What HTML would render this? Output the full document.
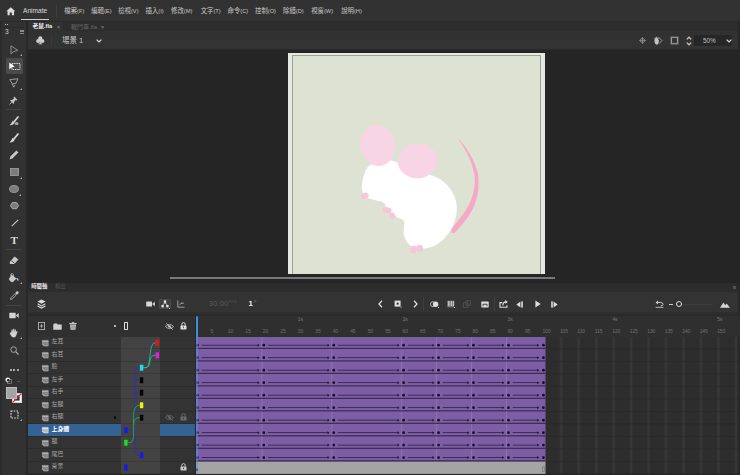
<!DOCTYPE html>
<html lang="zh-Hant">
<head>
<meta charset="utf-8">
<title>Animate</title>
<style>
*{margin:0;padding:0;box-sizing:border-box}
html,body{width:740px;height:475px;overflow:hidden;background:#252525}
body{position:relative;font-family:"Liberation Sans","Noto Sans CJK TC",sans-serif;color:#d0d0d0;font-size:7px;line-height:1}
.a{position:absolute}
.t{position:absolute;white-space:nowrap}
svg{position:absolute;overflow:visible}
</style>
</head>
<body>
<div class="a" style="left:0;top:0;width:740px;height:21.5px;background:#323232"></div>
<svg style="left:5.8px;top:6.6px" width="9.6" height="8.6" viewBox="0 0 11 10"><path d="M5.5 0.3 L0.3 4.9 H1.7 V9.6 H4.3 V6.4 H6.7 V9.6 H9.3 V4.9 H10.7 Z" fill="#dcdcdc"/></svg>
<div class="t" style="left:23px;top:8px;font-size:6.6px;color:#dcdcdc">Animate</div>
<div class="a" style="left:21px;top:18.6px;width:28px;height:1.2px;background:#cfcfcf"></div>
<div class="a" style="left:56px;top:5px;width:1px;height:12px;background:#3f3f3f"></div>
<div class="t" style="left:64.3px;top:7.6px;font-size:6.4px;color:#c8c8c8">檔案<span style="font-size:5.7px">(F)</span></div>
<div class="t" style="left:91.2px;top:7.6px;font-size:6.4px;color:#c8c8c8">編輯<span style="font-size:5.7px">(E)</span></div>
<div class="t" style="left:118.2px;top:7.6px;font-size:6.4px;color:#c8c8c8">檢視<span style="font-size:5.7px">(V)</span></div>
<div class="t" style="left:145.5px;top:7.6px;font-size:6.4px;color:#c8c8c8">插入<span style="font-size:5.7px">(I)</span></div>
<div class="t" style="left:171px;top:7.6px;font-size:6.4px;color:#c8c8c8">修改<span style="font-size:5.7px">(M)</span></div>
<div class="t" style="left:200.7px;top:7.6px;font-size:6.4px;color:#c8c8c8">文字<span style="font-size:5.7px">(T)</span></div>
<div class="t" style="left:227.5px;top:7.6px;font-size:6.4px;color:#c8c8c8">命令<span style="font-size:5.7px">(C)</span></div>
<div class="t" style="left:255px;top:7.6px;font-size:6.4px;color:#c8c8c8">控制<span style="font-size:5.7px">(O)</span></div>
<div class="t" style="left:283px;top:7.6px;font-size:6.4px;color:#c8c8c8">除錯<span style="font-size:5.7px">(D)</span></div>
<div class="t" style="left:311.2px;top:7.6px;font-size:6.4px;color:#c8c8c8">視窗<span style="font-size:5.7px">(W)</span></div>
<div class="t" style="left:341.2px;top:7.6px;font-size:6.4px;color:#c8c8c8">說明<span style="font-size:5.7px">(H)</span></div>
<div class="a" style="left:27px;top:21px;width:713px;height:10.5px;background:#2d2d2d"></div><div class="a" style="left:0;top:20.6px;width:740px;height:1.6px;background:#2a2a2a"></div><div class="a" style="left:28px;top:22.2px;width:34.6px;height:9.5px;background:#323232"></div>
<div class="t" style="left:32.6px;top:23.7px;font-size:5.7px;font-weight:bold;color:#f0f0f0">老鼠.fla</div>
<div class="t" style="left:56.8px;top:24px;font-size:6px;color:#8a8a8a">×</div>
<div class="t" style="left:71px;top:23.8px;font-size:6px;color:#686868">戰鬥車.fla</div>
<div class="t" style="left:100.8px;top:24px;font-size:6px;color:#8a8a8a">×</div>
<div class="a" style="left:27px;top:31px;width:711px;height:17.8px;background:linear-gradient(#303030,#323232 40%,#333333)"></div>
<div class="a" style="left:738px;top:21.5px;width:2px;height:260px;background:#262626"></div>
<svg style="left:35.6px;top:36.4px" width="8.6" height="8.6" viewBox="0 0 9 9"><circle cx="4.5" cy="2.4" r="2.1" fill="#cfcfcf"/><circle cx="2.3" cy="5.2" r="2.1" fill="#cfcfcf"/><circle cx="6.7" cy="5.2" r="2.1" fill="#cfcfcf"/><rect x="3.9" y="4" width="1.2" height="4.4" fill="#cfcfcf"/><rect x="2.6" y="7.8" width="3.8" height="0.9" fill="#cfcfcf"/></svg>
<div class="a" style="left:51px;top:36px;width:1px;height:10px;background:#3c3c3c"></div>
<div class="t" style="left:62px;top:36.6px;font-size:7.5px;color:#c4c4c4">場景 1</div>
<svg style="left:96.3px;top:38.6px" width="6" height="4" viewBox="0 0 6 4"><path d="M0.6 0.6 L3 3 L5.4 0.6" fill="none" stroke="#d8d8d8" stroke-width="1.2"/></svg>
<svg style="left:638.5px;top:36.5px" width="7" height="7" viewBox="0 0 7 7"><circle cx="3.5" cy="3.5" r="2.1" fill="none" stroke="#8c8c8c" stroke-width="0.9"/><path d="M3.5 0 V7 M0 3.5 H7" stroke="#8c8c8c" stroke-width="0.8"/></svg>
<svg style="left:652.6px;top:35.8px" width="10" height="10" viewBox="0 0 10 10"><path d="M1.5 3.5 Q1.5 1.2 2.5 1.2 L3 3 L3.3 0.8 L4 0.8 L4.2 3 L4.8 1.2 L5.5 1.5 L5.3 4 L6 4.5 Q5.5 8.5 4 8.8 Q2 8.5 1.5 6 Z" fill="#c4c4c4"/><path d="M5.6 1.2 L9 4.6 L6 7.6" fill="none" stroke="#a8a8a8" stroke-width="0.9"/></svg>
<svg style="left:669.5px;top:36px" width="9" height="9" viewBox="0 0 9 9"><rect x="1.4" y="1.4" width="6.2" height="6.2" fill="none" stroke="#a0a0a0" stroke-width="1.3"/><path d="M0 1.2 H9 M0 7.8 H9" stroke="#777" stroke-width="0.6"/></svg>
<svg style="left:685.5px;top:35.5px" width="6" height="10" viewBox="0 0 6 10"><path d="M0.8 3.4 L3 1.2 L5.2 3.4 M0.8 6.6 L3 8.8 L5.2 6.6" fill="none" stroke="#c4c4c4" stroke-width="1.3"/></svg>
<div class="a" style="left:694.3px;top:35.2px;width:38.2px;height:11px;background:#262626;border-radius:1px"></div>
<div class="t" style="left:703px;top:37.9px;font-size:6.4px;color:#c0c0c0">50%</div>
<svg style="left:726.3px;top:38.8px" width="6" height="4" viewBox="0 0 6 4"><path d="M0.6 0.6 L3 3 L5.4 0.6" fill="none" stroke="#d8d8d8" stroke-width="1.2"/></svg>
<div class="a" style="left:27px;top:48.8px;width:711px;height:1.8px;background:#2a2a2a"></div>
<div class="a" style="left:28px;top:50.4px;width:710px;height:232px;background:#252525"></div>
<div class="a" style="left:288px;top:53px;width:257px;height:221px;background:#e6e9e2"></div>
<div class="a" style="left:292px;top:55px;width:249px;height:219px;background:#dee2d3;border:1px solid #9da196;border-bottom:none"></div>
<svg style="left:0;top:0" width="740" height="475" viewBox="0 0 740 475">
<path d="M457.2 137.4 C466 146 475 160 478 174 C479.5 184 478.4 198 473 208.5 C468.5 217.5 462 225.5 455 232.5 C453 234 451 233 451.4 231 C452.5 227 458 221 462.5 215 C467 209 471 202 473 194 C475.3 185 475.2 178 474 173 C471.5 160 465 148 457.2 137.4 Z" fill="#f5a9c6"/>
<path d="M367.8 166.9 C365.7 169.3 364.5 173.6 363.5 176.9 C362.5 180.2 361.8 184.1 361.8 186.9 C361.8 189.6 362.3 191.5 363.5 193.4 C364.8 195.3 365.9 197.0 369.2 198.5 C372.5 200.0 380.5 200.8 383.4 202.5 C386.4 204.2 384.7 206.4 386.9 208.8 C389.0 211.1 393.4 214.6 396.3 216.7 C399.1 218.8 402.7 218.4 403.9 221.3 C405.2 224.1 403.0 230.2 403.6 233.8 C404.3 237.4 405.8 240.6 407.6 242.9 C409.5 245.2 411.7 246.6 414.7 247.5 C417.8 248.4 421.9 249.2 426.1 248.3 C430.4 247.5 436.1 245.7 440.3 242.3 C444.6 239.0 449.0 233.3 451.7 228.1 C454.5 222.9 456.4 216.3 456.8 211.0 C457.3 205.8 456.1 201.1 454.6 196.8 C453.0 192.5 450.5 188.8 447.5 185.4 C444.4 182.1 440.6 179.0 436.1 176.9 C431.6 174.8 425.4 174.1 420.4 172.6 C415.5 171.2 410.0 170.0 406.2 168.4 C402.4 166.7 401.0 164.1 397.7 162.7 C394.4 161.3 389.9 159.8 386.3 159.8 C382.7 159.8 379.4 161.5 376.3 162.7 C373.3 163.9 369.9 164.6 367.8 166.9 Z" fill="#ffffff"/>
<ellipse cx="377.6" cy="145.4" rx="17.4" ry="20.6" fill="#f7d5e5" transform="rotate(-10 377.6 145.4)"/>
<ellipse cx="417.8" cy="160.9" rx="20" ry="17.4" fill="#f7d5e5" transform="rotate(-6 417.8 160.9)"/>
<ellipse cx="364.8" cy="195.8" rx="3.9" ry="3" fill="#f6c6dc" transform="rotate(-25 364.8 195.8)"/>
<ellipse cx="387.2" cy="210.2" rx="4.4" ry="3" fill="#f6c6dc" transform="rotate(10 387.2 210.2)"/>
<ellipse cx="392.4" cy="215.6" rx="2.6" ry="3.4" fill="#f6c6dc" transform="rotate(-20 392.4 215.6)"/>
<ellipse cx="413.6" cy="249.6" rx="3.2" ry="4" fill="#f6c6dc" transform="rotate(20 413.6 249.6)"/>
<ellipse cx="419.6" cy="248.4" rx="3.4" ry="3.6" fill="#f6c6dc"/>
</svg>
<div class="a" style="left:170px;top:277px;width:385px;height:2px;background:#787878"></div>
<div class="a" style="left:0;top:21.5px;width:27px;height:454px;background:#323232"></div>
<div class="a" style="left:26.4px;top:21.5px;width:1.4px;height:454px;background:#282828"></div>
<div class="a" style="left:0;top:22px;width:2px;height:453px;background:#2b2b2b"></div>
<div class="a" style="left:4.5px;top:23.6px;width:1.2px;height:1.2px;background:#bbb"></div><div class="a" style="left:6.5px;top:23.6px;width:1.2px;height:1.2px;background:#bbb"></div>
<div class="a" style="left:3px;top:26.8px;width:21px;height:0.8px;background:#2a2a2a"></div>
<div class="t" style="left:5px;top:29.4px;font-size:6.6px;color:#d0d0d0">3</div>
<div class="a" style="left:20px;top:30px;width:4px;height:0.8px;background:#8a8a8a"></div><div class="a" style="left:20px;top:31.4px;width:4px;height:0.8px;background:#8a8a8a"></div><div class="a" style="left:20px;top:32.8px;width:4px;height:0.8px;background:#8a8a8a"></div>
<svg style="left:10.3px;top:45.0px" width="9" height="10" viewBox="0 0 9 10"><path d="M1 0.8 L1 8.8 L3.6 6.6 L7.8 5.4 Z" fill="none" stroke="#8e8e8e" stroke-width="1"/></svg>
<svg style="left:19.5px;top:53.5px" width="2" height="2" viewBox="0 0 2 2"><path d="M2 0 V2 H0 Z" fill="#aaa"/></svg>
<div class="a" style="left:6px;top:58px;width:17px;height:16px;background:#4b4b4b;border-radius:1.5px"></div>
<svg style="left:8.5px;top:61.5px" width="12" height="9" viewBox="0 0 12 9"><rect x="3" y="1.5" width="8" height="6" fill="none" stroke="#e8e8e8" stroke-width="0.9" stroke-dasharray="1.4 0.8"/><path d="M0.3 0.6 L0.3 7.4 L2.2 5.8 L5.6 4.6 Z" fill="#ffffff"/></svg>
<svg style="left:9.2px;top:78.0px" width="10" height="10" viewBox="0 0 10 10"><path d="M0.8 1.6 L9 0.8 L7 5.2 L3.4 6 Z" fill="none" stroke="#a8a8a8" stroke-width="0.9"/><path d="M3.4 6 L4.6 9.2 L6 7" fill="none" stroke="#a8a8a8" stroke-width="0.9"/></svg>
<svg style="left:19.6px;top:87.8px" width="2" height="2" viewBox="0 0 2 2"><path d="M2 0 V2 H0 Z" fill="#aaa"/></svg>
<svg style="left:9.0px;top:95.5px" width="9" height="9" viewBox="0 0 9 9"><path d="M5.2 0.6 L8.4 3.8 L7.4 4.4 L6.6 4 L5 6 L5.2 7.4 L4.4 7.8 L1.2 4.6 L1.8 3.8 L3 4 L5 2.4 L4.6 1.4 Z" fill="#c6c6c6"/><path d="M2.8 6.2 L0.6 8.4" stroke="#c6c6c6" stroke-width="0.9"/></svg>
<div class="a" style="left:6px;top:109.4px;width:15px;height:1px;background:#444"></div>
<svg style="left:9.2px;top:116.0px" width="10" height="10" viewBox="0 0 10 10"><path d="M9 1 L5.2 5.6" stroke="#d4d4d4" stroke-width="1.7" stroke-linecap="round"/><path d="M3.6 4.8 L5.6 6.8 Q4.6 9.4 0.6 9.2 Q2.6 7.6 3.6 4.8Z" fill="#d4d4d4"/><ellipse cx="7.6" cy="7.6" rx="1.9" ry="1.5" fill="#a8a8a8"/></svg>
<svg style="left:9.2px;top:133.0px" width="10" height="10" viewBox="0 0 10 10"><path d="M9 1 L5.2 5.6" stroke="#d8d8d8" stroke-width="1.7" stroke-linecap="round"/><path d="M3.6 4.8 L5.6 6.8 Q4.6 9.6 0.6 9.4 Q2.6 7.6 3.6 4.8Z" fill="#d8d8d8"/></svg>
<svg style="left:9.0px;top:150.0px" width="10" height="10" viewBox="0 0 10 10"><path d="M7.4 0.6 L9.4 2.6 L3.4 8.6 L0.6 9.4 L1.4 6.6 Z" fill="#c8c8c8"/></svg>
<svg style="left:9.8px;top:168.2px" width="9" height="8" viewBox="0 0 9 8"><rect x="0.5" y="0.5" width="8" height="7" fill="#7c7c7c" stroke="#a4a4a4" stroke-width="0.8"/></svg>
<svg style="left:19.6px;top:176.8px" width="2" height="2" viewBox="0 0 2 2"><path d="M2 0 V2 H0 Z" fill="#aaa"/></svg>
<svg style="left:9.0px;top:185.0px" width="10" height="8" viewBox="0 0 10 8"><ellipse cx="5" cy="4" rx="4.5" ry="3.5" fill="#7c7c7c" stroke="#a4a4a4" stroke-width="0.8"/></svg>
<svg style="left:19px;top:193.5px" width="2" height="2" viewBox="0 0 2 2"><path d="M2 0 V2 H0 Z" fill="#aaa"/></svg>
<svg style="left:9.5px;top:202.20000000000002px" width="9" height="7.2" viewBox="0 0 9 7.2"><path d="M2.4 0.5 H6.6 L8.6 3.6 L6.6 6.7 H2.4 L0.4 3.6 Z" fill="#7c7c7c" stroke="#b4b4b4" stroke-width="0.9"/></svg>
<svg style="left:10.5px;top:218.8px" width="8" height="8" viewBox="0 0 8 8"><path d="M0.8 7.2 L7.2 0.8" stroke="#c4c4c4" stroke-width="1.2"/></svg>
<div class="t" style="left:10.5px;top:235.4px;font-size:11px;font-family:'Liberation Serif',serif;font-weight:bold;color:#dcdcdc">T</div>
<div class="a" style="left:6px;top:249.4px;width:15px;height:1px;background:#444"></div>
<svg style="left:9.3px;top:256.0px" width="10" height="9" viewBox="0 0 10 9"><path d="M5.6 0.6 L9.4 3.4 L5.4 8 L1 8 L0.6 6 Z" fill="#c8c8c8"/><path d="M2.2 4.6 L5.6 7.4" stroke="#323232" stroke-width="0.8"/></svg>
<svg style="left:7.5px;top:273.0px" width="11" height="10" viewBox="0 0 11 10"><path d="M3.6 1.6 L8.4 5.4 L5 9 Q3.6 9.6 2 8 L0.8 6 Z" fill="#c8c8c8"/><path d="M3.4 3.6 Q1.6 0.4 4.4 0.6 Q5.8 1 5.4 3" fill="none" stroke="#c8c8c8" stroke-width="0.8"/><path d="M8.2 5.2 Q10.8 4.6 10.4 8.2 Q9 7 8.2 5.2Z" fill="#c8c8c8"/></svg>
<svg style="left:19.5px;top:282px" width="2" height="2" viewBox="0 0 2 2"><path d="M2 0 V2 H0 Z" fill="#aaa"/></svg>
<svg style="left:9.7px;top:290.7px" width="9" height="9" viewBox="0 0 10 10"><path d="M7.2 0.6 Q8.6 -0.2 9.4 0.8 Q10.2 1.8 9.2 2.8 L7.8 4.2 L5.8 2.2 Z" fill="#c8c8c8"/><path d="M5.6 3 L7 4.4 L2.6 8.8 L0.6 9.4 L1.2 7.4 Z" fill="none" stroke="#c8c8c8" stroke-width="0.8"/></svg>
<div class="a" style="left:6px;top:305.2px;width:15px;height:1px;background:#444"></div>
<svg style="left:9.2px;top:312.1px" width="10" height="7" viewBox="0 0 10 7"><rect x="0.3" y="0.8" width="6.4" height="5.4" rx="0.6" fill="#d4d4d4"/><path d="M6.9 3.5 L9.7 1 V6 Z" fill="#d4d4d4"/></svg>
<svg style="left:8.5px;top:327.5px" width="10" height="10" viewBox="0 0 10 10"><path d="M2.2 4.4 L2.6 1.6 L3.6 1.6 L3.8 4 L4.2 0.8 L5.2 0.8 L5.4 4 L6 1.4 L7 1.6 L6.8 4.6 L7.6 3 L8.6 3.4 L7.6 6.6 Q7 9.4 4.6 9.4 Q2.6 9.2 1.6 7 L0.6 5 L1.4 4.4 Z" fill="#d0d0d0"/></svg>
<svg style="left:19.5px;top:336.5px" width="2" height="2" viewBox="0 0 2 2"><path d="M2 0 V2 H0 Z" fill="#aaa"/></svg>
<svg style="left:9.9px;top:345.7px" width="9" height="9" viewBox="0 0 9 9"><circle cx="3.6" cy="3.6" r="2.8" fill="none" stroke="#b0b0b0" stroke-width="0.9"/><path d="M5.7 5.7 L8.5 8.5" stroke="#b0b0b0" stroke-width="1.2"/></svg>
<div class="a" style="left:10.3px;top:368.8px;width:2px;height:2px;border-radius:1px;background:#d0d0d0"></div>
<div class="a" style="left:13.4px;top:368.8px;width:2px;height:2px;border-radius:1px;background:#d0d0d0"></div>
<div class="a" style="left:16.5px;top:368.8px;width:2px;height:2px;border-radius:1px;background:#d0d0d0"></div>
<svg style="left:5.300000000000001px;top:376.7px" width="7" height="7" viewBox="0 0 7 7"><rect x="2.6" y="2.6" width="3.8" height="3.8" fill="none" stroke="#8a8a8a" stroke-width="0.7"/><circle cx="2.8" cy="2.8" r="2.4" fill="#f0f0f0"/><circle cx="3.3" cy="3.3" r="1.3" fill="#111"/></svg>
<div class="a" style="left:16.5px;top:380.8px;width:3.5px;height:0.7px;background:#555"></div>
<div class="a" style="left:11.5px;top:393px;width:10px;height:10px;background:#fff;border:0.8px solid #d8d8d8"></div>
<svg style="left:11.5px;top:393px" width="10" height="10" viewBox="0 0 10 10"><rect x="2.4" y="2.4" width="5.2" height="5.2" fill="#323232"/><path d="M0.5 9.5 L9.5 0.5" stroke="#e0203a" stroke-width="1.1"/></svg>
<div class="a" style="left:5.5px;top:387px;width:11.5px;height:11.5px;background:#a4a4a4;border:0.6px solid #bdbdbd"></div>
<svg style="left:9.6px;top:410.1px" width="9" height="9" viewBox="0 0 9 9"><rect x="1" y="1" width="7" height="7" fill="none" stroke="#dcdcdc" stroke-width="1.1" stroke-dasharray="1.6 1.1"/></svg>
<svg style="left:19.8px;top:419px" width="2" height="2" viewBox="0 0 2 2"><path d="M2 0 V2 H0 Z" fill="#aaa"/></svg>
<div class="a" style="left:28px;top:282.5px;width:712px;height:192.5px;background:#333333"></div>
<div class="a" style="left:28px;top:282.5px;width:712px;height:9.5px;background:#2c2c2c"></div>
<div class="a" style="left:28px;top:312px;width:712px;height:4px;background:linear-gradient(#303030,#2a2a2a 70%,#2a2a2a)"></div>
<div class="a" style="left:28px;top:316px;width:168px;height:20.5px;background:#303030"></div>
<div class="t" style="left:31.3px;top:283.9px;font-size:5.3px;font-weight:bold;color:#ececec">時間軸</div>
<div class="t" style="left:55px;top:283.9px;font-size:5.3px;color:#555">輸出</div>
<div class="a" style="left:732.6px;top:285.6px;width:3.2px;height:3.2px;background:#505050"></div>
<svg style="left:37.10px;top:299.40px" width="9" height="10" viewBox="0 0 9 10"><path d="M4.5 0.4 L8.6 2.6 L4.5 4.8 L0.4 2.6 Z" fill="#dcdcdc"/><path d="M0.6 4.8 L4.5 6.9 L8.4 4.8 M0.6 7 L4.5 9.1 L8.4 7" fill="none" stroke="#dcdcdc" stroke-width="1.1"/></svg>
<svg style="left:145.50px;top:301.30px" width="9" height="6" viewBox="0 0 9 6"><rect x="0.2" y="0.4" width="5.8" height="5.2" rx="0.6" fill="#d8d8d8"/><path d="M6.2 3 L8.8 0.8 V5.2 Z" fill="#d8d8d8"/></svg>
<div class="a" style="left:159.3px;top:298.6px;width:11.4px;height:10.6px;background:#3e3e3e;border:0.6px solid #4a4a4a;border-radius:1px"></div>
<svg style="left:160.80px;top:300.00px" width="8" height="8" viewBox="0 0 8 8"><rect x="2.8" y="0.4" width="2.4" height="2.4" fill="#e4e4e4"/><rect x="0.4" y="5" width="2.4" height="2.4" fill="#e4e4e4"/><rect x="5.2" y="5" width="2.4" height="2.4" fill="#e4e4e4"/><path d="M4 2.8 L1.6 5 M4 2.8 L6.4 5" stroke="#e4e4e4" stroke-width="0.8"/></svg>
<div class="a" style="left:169px;top:308px;width:1px;height:1px;background:#ccc"></div>
<svg style="left:177.00px;top:300.40px" width="8" height="8" viewBox="0 0 8 8"><path d="M0.8 0.4 V7.2 H7.6" fill="none" stroke="#a8a8a8" stroke-width="0.9"/><path d="M2.4 5.2 L4.4 3.2 L7 3.2" fill="none" stroke="#a8a8a8" stroke-width="0.8"/><circle cx="4.4" cy="3.2" r="0.8" fill="#a8a8a8"/></svg>
<div class="t" style="left:208.5px;top:300.4px;font-size:7.8px;color:#585858;letter-spacing:0.1px">30.00<span style="font-size:3.6px;position:relative;top:-3.2px;left:0.6px">FPS</span></div>
<div class="t" style="left:248.6px;top:300.4px;font-size:7.8px;color:#f0f0f0;font-weight:bold">1<span style="font-size:3.6px;position:relative;top:-3.2px;left:1.4px;color:#777;font-weight:normal">F</span></div>
<svg style="left:378.00px;top:300.00px" width="5" height="8" viewBox="0 0 5 8"><path d="M4 0.8 L1 4 L4 7.2" fill="none" stroke="#dedede" stroke-width="1.3"/></svg>
<svg style="left:393.80px;top:300.00px" width="8" height="8" viewBox="0 0 8 8"><rect x="0.6" y="0.6" width="6" height="6" fill="#dedede"/><rect x="2.7" y="2.7" width="1.9" height="1.9" fill="#2a2a2a"/><rect x="6.6" y="6.6" width="1" height="1" fill="#dedede"/></svg>
<svg style="left:412.50px;top:300.00px" width="5" height="8" viewBox="0 0 5 8"><path d="M1 0.8 L4 4 L1 7.2" fill="none" stroke="#dedede" stroke-width="1.3"/></svg>
<div class="a" style="left:423.2px;top:297px;width:1px;height:14px;background:#404040"></div>
<svg style="left:429.70px;top:300.50px" width="9" height="7" viewBox="0 0 9 7"><circle cx="3" cy="3.2" r="2.5" fill="none" stroke="#bcbcbc" stroke-width="0.9"/><circle cx="5.6" cy="3.2" r="2.7" fill="#dedede"/><rect x="8" y="6" width="1" height="1" fill="#dedede"/></svg>
<svg style="left:446.60px;top:300.00px" width="8" height="8" viewBox="0 0 8 8"><rect x="0.6" y="0.8" width="2.2" height="5.2" fill="#bdbdbd"/><rect x="3.4" y="0.8" width="2.2" height="5.2" fill="#bdbdbd"/><rect x="6" y="0.8" width="1.2" height="5.2" fill="#bdbdbd"/><path d="M0.4 6.8 H7" stroke="#bdbdbd" stroke-width="0.7"/><rect x="7" y="7" width="1" height="1" fill="#dedede"/></svg>
<svg style="left:463.30px;top:300.20px" width="8" height="8" viewBox="0 0 8 8"><rect x="0.6" y="2.8" width="4.4" height="4.4" fill="none" stroke="#555" stroke-width="0.8"/><rect x="3" y="0.8" width="4.4" height="4.4" fill="none" stroke="#555" stroke-width="0.8"/></svg>
<svg style="left:480.60px;top:300.70px" width="8" height="7" viewBox="0 0 8 7"><rect x="0.3" y="0.5" width="7.4" height="6" rx="0.8" fill="#dedede"/><path d="M2 5.2 V3.2 H6 V5.2" fill="none" stroke="#2f2f2f" stroke-width="0.9"/></svg>
<div class="a" style="left:493.5px;top:297px;width:1px;height:14px;background:#3e3e3e"></div>
<svg style="left:499.10px;top:300.00px" width="9" height="8" viewBox="0 0 9 8"><path d="M3.2 2.6 H1 V7.2 H8 V5.2" fill="none" stroke="#dedede" stroke-width="1.1"/><path d="M3.9 5.4 Q4 2 6.8 1.9" fill="none" stroke="#dedede" stroke-width="1.1"/><path d="M6.2 0 L8.9 1.9 L6.2 3.8 Z" fill="#dedede"/></svg>
<svg style="left:516.40px;top:300.50px" width="8" height="7" viewBox="0 0 8 7"><path d="M4.4 0.4 L0.4 3.5 L4.4 6.6 Z" fill="#dedede"/><rect x="5.2" y="0.4" width="1.6" height="6.2" fill="#dedede"/></svg>
<svg style="left:535.00px;top:300.00px" width="6" height="8" viewBox="0 0 6 8"><path d="M0.4 0.4 L5.8 4 L0.4 7.6 Z" fill="#dedede"/></svg>
<svg style="left:550.40px;top:300.50px" width="8" height="7" viewBox="0 0 8 7"><path d="M3.6 0.4 L7.6 3.5 L3.6 6.6 Z" fill="#dedede"/><rect x="1.2" y="0.4" width="1.6" height="6.2" fill="#dedede"/></svg>
<svg style="left:654.80px;top:300.20px" width="9" height="8" viewBox="0 0 9 8"><path d="M2.2 2.4 H5.6 Q8.2 2.6 8 4.6 Q7.6 6 5.6 6" fill="none" stroke="#cfcfcf" stroke-width="1"/><path d="M3 0.4 L0.6 2.4 L3 4.4 Z" fill="#cfcfcf"/><path d="M0.6 7.4 H8.4" stroke="#cfcfcf" stroke-width="0.8"/></svg>
<div class="a" style="left:668.5px;top:303.7px;width:4.5px;height:1.1px;background:#cfcfcf"></div>
<div class="a" style="left:681px;top:303.9px;width:32px;height:0.8px;background:#3d3d3d"></div>
<div class="a" style="left:675.5px;top:301.2px;width:6px;height:6px;border:1.1px solid #e0e0e0;border-radius:3px;background:#2f2f2f"></div>
<svg style="left:719.60px;top:301.50px" width="10" height="6" viewBox="0 0 10 6"><path d="M0 5.8 L3.4 0.6 L5.2 3.2 L6.6 1.4 L10 5.8 Z" fill="#d4d4d4"/></svg>
<svg style="left:37.90px;top:322.00px" width="7" height="8" viewBox="0 0 7 8"><rect x="0.4" y="0.4" width="6.2" height="7.2" fill="none" stroke="#bdbdbd" stroke-width="0.8"/><path d="M3.5 2.2 V5.8 M1.9 4 H5.1" stroke="#bdbdbd" stroke-width="0.8"/></svg>
<svg style="left:53.10px;top:322.50px" width="9" height="7" viewBox="0 0 9 7"><path d="M0.3 1.6 L0.3 6.7 H8.7 V1.6 H4.8 L4 0.4 H1.1 Z" fill="#d0d0d0"/></svg>
<svg style="left:69.00px;top:322.00px" width="8" height="8" viewBox="0 0 8 8"><path d="M1 2.4 H7 L6.4 7.8 H1.6 Z" fill="#d0d0d0"/><path d="M0.2 1.5 H7.8 M2.8 0.5 H5.2" stroke="#d0d0d0" stroke-width="0.9"/><path d="M3 3.4 V6.8 M5 3.4 V6.8" stroke="#2f2f2f" stroke-width="0.6"/></svg>
<div class="a" style="left:114px;top:325px;width:2.2px;height:2.2px;border-radius:1px;background:#dcdcdc"></div>
<div class="a" style="left:124px;top:322px;width:4px;height:8.4px;border:0.9px solid #e0e0e0;border-radius:0.8px"></div>
<svg style="left:165.20px;top:322.50px" width="9" height="7" viewBox="0 0 9 7"><path d="M0.4 3.5 Q4.5 -0.6 8.6 3.5 Q4.5 7.6 0.4 3.5 Z" fill="none" stroke="#c8c8c8" stroke-width="0.8"/><circle cx="4.5" cy="3.5" r="1.3" fill="#c8c8c8"/><path d="M1.2 0.4 L7.8 6.6" stroke="#c8c8c8" stroke-width="0.9"/></svg>
<svg style="left:179.50px;top:321.80px" width="7" height="8" viewBox="0 0 7 8"><path d="M1.8 3.6 V2.4 Q1.8 0.6 3.5 0.6 Q5.2 0.6 5.2 2.4 V3.6" fill="none" stroke="#e0e0e0" stroke-width="1"/><rect x="0.5" y="3.4" width="6" height="4.2" rx="0.5" fill="#e0e0e0"/><rect x="3.1" y="4.6" width="0.8" height="1.6" fill="#2f2f2f"/></svg>
<div class="a" style="left:121.3px;top:336.5px;width:39px;height:137.39px;background:#434343;border-radius:1.5px 1.5px 0 0"></div>
<div class="a" style="left:28px;top:348.49px;width:168px;height:0.7px;background:rgba(0,0,0,0.13)"></div>
<svg style="left:41.70px;top:339.75px" width="6.6" height="6.4" viewBox="0 0 6.6 6.4"><path d="M0.4 0.4 H6.2 V6 H1.9 L0.4 4.5 Z" fill="#868686" stroke="#b4b4b4" stroke-width="0.6"/><path d="M0.4 1.5 H6.2" stroke="#b4b4b4" stroke-width="0.9"/><path d="M0.4 4.5 H1.9 V6" fill="none" stroke="#b4b4b4" stroke-width="0.5"/></svg>
<div class="t" style="left:51.6px;top:339.40px;font-size:5.9px;color:#a8a8a8;font-weight:normal">左耳</div>
<div class="a" style="left:28px;top:360.98px;width:168px;height:0.7px;background:rgba(0,0,0,0.13)"></div>
<svg style="left:41.70px;top:352.24px" width="6.6" height="6.4" viewBox="0 0 6.6 6.4"><path d="M0.4 0.4 H6.2 V6 H1.9 L0.4 4.5 Z" fill="#868686" stroke="#b4b4b4" stroke-width="0.6"/><path d="M0.4 1.5 H6.2" stroke="#b4b4b4" stroke-width="0.9"/><path d="M0.4 4.5 H1.9 V6" fill="none" stroke="#b4b4b4" stroke-width="0.5"/></svg>
<div class="t" style="left:51.6px;top:351.89px;font-size:5.9px;color:#a8a8a8;font-weight:normal">右耳</div>
<div class="a" style="left:28px;top:373.47px;width:168px;height:0.7px;background:rgba(0,0,0,0.13)"></div>
<svg style="left:41.70px;top:364.73px" width="6.6" height="6.4" viewBox="0 0 6.6 6.4"><path d="M0.4 0.4 H6.2 V6 H1.9 L0.4 4.5 Z" fill="#868686" stroke="#b4b4b4" stroke-width="0.6"/><path d="M0.4 1.5 H6.2" stroke="#b4b4b4" stroke-width="0.9"/><path d="M0.4 4.5 H1.9 V6" fill="none" stroke="#b4b4b4" stroke-width="0.5"/></svg>
<div class="t" style="left:51.6px;top:364.38px;font-size:5.9px;color:#a8a8a8;font-weight:normal">臉</div>
<div class="a" style="left:28px;top:385.96px;width:168px;height:0.7px;background:rgba(0,0,0,0.13)"></div>
<svg style="left:41.70px;top:377.22px" width="6.6" height="6.4" viewBox="0 0 6.6 6.4"><path d="M0.4 0.4 H6.2 V6 H1.9 L0.4 4.5 Z" fill="#868686" stroke="#b4b4b4" stroke-width="0.6"/><path d="M0.4 1.5 H6.2" stroke="#b4b4b4" stroke-width="0.9"/><path d="M0.4 4.5 H1.9 V6" fill="none" stroke="#b4b4b4" stroke-width="0.5"/></svg>
<div class="t" style="left:51.6px;top:376.87px;font-size:5.9px;color:#a8a8a8;font-weight:normal">左手</div>
<div class="a" style="left:28px;top:398.45px;width:168px;height:0.7px;background:rgba(0,0,0,0.13)"></div>
<svg style="left:41.70px;top:389.70px" width="6.6" height="6.4" viewBox="0 0 6.6 6.4"><path d="M0.4 0.4 H6.2 V6 H1.9 L0.4 4.5 Z" fill="#868686" stroke="#b4b4b4" stroke-width="0.6"/><path d="M0.4 1.5 H6.2" stroke="#b4b4b4" stroke-width="0.9"/><path d="M0.4 4.5 H1.9 V6" fill="none" stroke="#b4b4b4" stroke-width="0.5"/></svg>
<div class="t" style="left:51.6px;top:389.36px;font-size:5.9px;color:#a8a8a8;font-weight:normal">右手</div>
<div class="a" style="left:28px;top:410.94px;width:168px;height:0.7px;background:rgba(0,0,0,0.13)"></div>
<svg style="left:41.70px;top:402.19px" width="6.6" height="6.4" viewBox="0 0 6.6 6.4"><path d="M0.4 0.4 H6.2 V6 H1.9 L0.4 4.5 Z" fill="#868686" stroke="#b4b4b4" stroke-width="0.6"/><path d="M0.4 1.5 H6.2" stroke="#b4b4b4" stroke-width="0.9"/><path d="M0.4 4.5 H1.9 V6" fill="none" stroke="#b4b4b4" stroke-width="0.5"/></svg>
<div class="t" style="left:51.6px;top:401.85px;font-size:5.9px;color:#a8a8a8;font-weight:normal">左腿</div>
<div class="a" style="left:28px;top:423.43px;width:168px;height:0.7px;background:rgba(0,0,0,0.13)"></div>
<svg style="left:41.70px;top:414.69px" width="6.6" height="6.4" viewBox="0 0 6.6 6.4"><path d="M0.4 0.4 H6.2 V6 H1.9 L0.4 4.5 Z" fill="#868686" stroke="#b4b4b4" stroke-width="0.6"/><path d="M0.4 1.5 H6.2" stroke="#b4b4b4" stroke-width="0.9"/><path d="M0.4 4.5 H1.9 V6" fill="none" stroke="#b4b4b4" stroke-width="0.5"/></svg>
<div class="t" style="left:51.6px;top:414.34px;font-size:5.9px;color:#a8a8a8;font-weight:normal">右腿</div>
<div class="a" style="left:28px;top:423.93px;width:93.3px;height:12.49px;background:#346293"></div>
<div class="a" style="left:160.3px;top:423.93px;width:35.2px;height:12.49px;background:#346293"></div>
<div class="a" style="left:28px;top:435.92px;width:168px;height:0.7px;background:rgba(0,0,0,0.13)"></div>
<svg style="left:41.70px;top:427.18px" width="6.6" height="6.4" viewBox="0 0 6.6 6.4"><path d="M0.4 0.4 H6.2 V6 H1.9 L0.4 4.5 Z" fill="#b8b8b8" stroke="#e8e8e8" stroke-width="0.6"/><path d="M0.4 1.5 H6.2" stroke="#e8e8e8" stroke-width="0.9"/><path d="M0.4 4.5 H1.9 V6" fill="none" stroke="#e8e8e8" stroke-width="0.5"/></svg>
<div class="t" style="left:51.6px;top:426.83px;font-size:5.9px;color:#ffffff;font-weight:bold">上身體</div>
<div class="a" style="left:28px;top:448.41px;width:168px;height:0.7px;background:rgba(0,0,0,0.13)"></div>
<svg style="left:41.70px;top:439.67px" width="6.6" height="6.4" viewBox="0 0 6.6 6.4"><path d="M0.4 0.4 H6.2 V6 H1.9 L0.4 4.5 Z" fill="#868686" stroke="#b4b4b4" stroke-width="0.6"/><path d="M0.4 1.5 H6.2" stroke="#b4b4b4" stroke-width="0.9"/><path d="M0.4 4.5 H1.9 V6" fill="none" stroke="#b4b4b4" stroke-width="0.5"/></svg>
<div class="t" style="left:51.6px;top:439.32px;font-size:5.9px;color:#a8a8a8;font-weight:normal">腿</div>
<div class="a" style="left:28px;top:460.90px;width:168px;height:0.7px;background:rgba(0,0,0,0.13)"></div>
<svg style="left:41.70px;top:452.15px" width="6.6" height="6.4" viewBox="0 0 6.6 6.4"><path d="M0.4 0.4 H6.2 V6 H1.9 L0.4 4.5 Z" fill="#868686" stroke="#b4b4b4" stroke-width="0.6"/><path d="M0.4 1.5 H6.2" stroke="#b4b4b4" stroke-width="0.9"/><path d="M0.4 4.5 H1.9 V6" fill="none" stroke="#b4b4b4" stroke-width="0.5"/></svg>
<div class="t" style="left:51.6px;top:451.81px;font-size:5.9px;color:#a8a8a8;font-weight:normal">尾巴</div>
<div class="a" style="left:28px;top:473.39px;width:168px;height:0.7px;background:rgba(0,0,0,0.13)"></div>
<svg style="left:41.70px;top:464.64px" width="6.6" height="6.4" viewBox="0 0 6.6 6.4"><path d="M0.4 0.4 H6.2 V6 H1.9 L0.4 4.5 Z" fill="#868686" stroke="#b4b4b4" stroke-width="0.6"/><path d="M0.4 1.5 H6.2" stroke="#b4b4b4" stroke-width="0.9"/><path d="M0.4 4.5 H1.9 V6" fill="none" stroke="#b4b4b4" stroke-width="0.5"/></svg>
<div class="t" style="left:51.6px;top:464.30px;font-size:5.9px;color:#a8a8a8;font-weight:normal">背景</div>
<div class="a" style="left:113.5px;top:416.49px;width:2.4px;height:2.4px;border-radius:1px;background:#0c0c0c"></div>
<svg style="left:165.20px;top:414.19px" width="9" height="7" viewBox="0 0 9 7"><path d="M0.4 3.5 Q4.5 -0.6 8.6 3.5 Q4.5 7.6 0.4 3.5 Z" fill="none" stroke="#6a6a6a" stroke-width="0.8"/><circle cx="4.5" cy="3.5" r="1.3" fill="#6a6a6a"/><path d="M1.2 0.4 L7.8 6.6" stroke="#6a6a6a" stroke-width="0.9"/></svg>
<svg style="left:179.50px;top:413.49px" width="7" height="8" viewBox="0 0 7 8"><path d="M1.8 3.6 V2.4 Q1.8 0.6 3.5 0.6 Q5.2 0.6 5.2 2.4 V3.6" fill="none" stroke="#6a6a6a" stroke-width="1"/><rect x="0.5" y="3.4" width="6" height="4.2" rx="0.5" fill="#6a6a6a"/><rect x="3.1" y="4.6" width="0.8" height="1.6" fill="#2f2f2f"/></svg>
<svg style="left:179.50px;top:463.44px" width="7" height="8" viewBox="0 0 7 8"><path d="M1.8 3.6 V2.4 Q1.8 0.6 3.5 0.6 Q5.2 0.6 5.2 2.4 V3.6" fill="none" stroke="#c8c8c8" stroke-width="1"/><rect x="0.5" y="3.4" width="6" height="4.2" rx="0.5" fill="#c8c8c8"/><rect x="3.1" y="4.6" width="0.8" height="1.6" fill="#2f2f2f"/></svg>
<svg style="left:0;top:0" width="740" height="475" viewBox="0 0 740 475"><path d="M155.6 342.7 C150 342.7 150.5 355.2 149.5 359.2 C148.5 367.7 147 367.7 143.4 367.7" fill="none" stroke="#20c9a6" stroke-width="0.8"/><path d="M155.6 355.2 C151 355.2 150.5 358.2 150 361.2 C149 367.7 147 367.7 143.4 367.7" fill="none" stroke="#20c9a6" stroke-width="0.8"/><path d="M139.8 367.7 C135.5 367.7 134.8 370.7 134.8 375.7 V424.2 C134.8 430.2 132 430.2 127.6 430.2" fill="none" stroke="#2a2cc8" stroke-width="0.8"/><path d="M139.8 455.2 C136 455.2 134.8 452.2 134.8 448.2 V430.2" fill="none" stroke="#2a2cc8" stroke-width="0.8"/><path d="M139.8 380.2 H136.6 Q134.8 380.2 134.8 382.2" fill="none" stroke="#2a2cc8" stroke-width="0.7"/><path d="M139.8 392.7 H136.6 Q134.8 392.7 134.8 394.7" fill="none" stroke="#2a2cc8" stroke-width="0.7"/><path d="M139.8 405.2 C135 405.2 133.6 409.2 133.6 417.7 V434.7 C133.6 442.7 131 442.7 127.8 442.7" fill="none" stroke="#19c437" stroke-width="0.8"/><path d="M139.8 417.7 C136 417.7 133.6 419.7 133.6 424.7" fill="none" stroke="#19c437" stroke-width="0.8"/><rect x="155.6" y="339.7" width="3.4" height="6" rx="0.6" fill="#ee1111"/><rect x="155.6" y="352.2" width="3.4" height="6" rx="0.6" fill="#f018e8"/><rect x="139.9" y="364.7" width="3.4" height="6" rx="0.6" fill="#18e0f0"/><rect x="139.9" y="377.2" width="3.4" height="6" rx="0.6" fill="#050505"/><rect x="139.9" y="389.7" width="3.4" height="6" rx="0.6" fill="#050505"/><rect x="139.9" y="402.2" width="3.4" height="6" rx="0.6" fill="#f4ee10"/><rect x="139.9" y="414.7" width="3.4" height="6" rx="0.6" fill="#050505"/><rect x="124.2" y="427.2" width="3.4" height="6" rx="0.6" fill="#1418ee"/><rect x="124.2" y="439.7" width="3.4" height="6" rx="0.6" fill="#14e61c"/><rect x="139.9" y="452.2" width="3.4" height="6" rx="0.6" fill="#1418ee"/><rect x="124.2" y="464.6" width="3.4" height="6" rx="0.6" fill="#1418ee"/></svg>
<div class="a" style="left:195.4px;top:315.5px;width:0.6px;height:159.5px;background:#262626"></div>
<div class="a" style="left:196px;top:336.5px;width:544px;height:138.5px;background:#2d2d2d"></div>
<svg style="left:0;top:0" width="740" height="475" viewBox="0 0 740 475"><rect x="559.78" y="336.5" width="2.9" height="137.4" fill="#363636"/><rect x="577.25" y="336.5" width="2.9" height="137.4" fill="#363636"/><rect x="594.73" y="336.5" width="2.9" height="137.4" fill="#363636"/><rect x="612.20" y="336.5" width="2.9" height="137.4" fill="#363636"/><rect x="629.68" y="336.5" width="2.9" height="137.4" fill="#363636"/><rect x="647.15" y="336.5" width="2.9" height="137.4" fill="#363636"/><rect x="664.63" y="336.5" width="2.9" height="137.4" fill="#363636"/><rect x="682.11" y="336.5" width="2.9" height="137.4" fill="#363636"/><rect x="699.58" y="336.5" width="2.9" height="137.4" fill="#363636"/><rect x="717.05" y="336.5" width="2.9" height="137.4" fill="#363636"/><rect x="734.53" y="336.5" width="2.9" height="137.4" fill="#363636"/><rect x="545" y="348.59" width="195" height="0.7" fill="#2a2a2a"/><rect x="545" y="361.08" width="195" height="0.7" fill="#2a2a2a"/><rect x="545" y="373.57" width="195" height="0.7" fill="#2a2a2a"/><rect x="545" y="386.06" width="195" height="0.7" fill="#2a2a2a"/><rect x="545" y="398.55" width="195" height="0.7" fill="#2a2a2a"/><rect x="545" y="411.04" width="195" height="0.7" fill="#2a2a2a"/><rect x="545" y="423.53" width="195" height="0.7" fill="#2a2a2a"/><rect x="545" y="436.02" width="195" height="0.7" fill="#2a2a2a"/><rect x="545" y="448.51" width="195" height="0.7" fill="#2a2a2a"/><rect x="545" y="461.00" width="195" height="0.7" fill="#2a2a2a"/><rect x="545" y="473.49" width="195" height="0.7" fill="#2a2a2a"/><rect x="196" y="336.5" width="349.50" height="124.90" fill="#7d5ea4"/><rect x="196" y="461.40" width="349.50" height="12.49" fill="#a4a4a4"/><rect x="261.50" y="336.5" width="0.9" height="124.90" fill="#a389c4" opacity="0.5"/><rect x="331.41" y="336.5" width="0.9" height="124.90" fill="#a389c4" opacity="0.5"/><rect x="401.31" y="336.5" width="0.9" height="124.90" fill="#a389c4" opacity="0.5"/><rect x="436.25" y="336.5" width="0.9" height="124.90" fill="#a389c4" opacity="0.5"/><rect x="471.21" y="336.5" width="0.9" height="124.90" fill="#a389c4" opacity="0.5"/><rect x="506.16" y="336.5" width="0.9" height="124.90" fill="#a389c4" opacity="0.5"/><rect x="196" y="347.79" width="349.50" height="1.2" fill="#3d2a55"/><rect x="201.60" y="344.80" width="57.20" height="0.8" fill="#2c1d40"/><path d="M257.60 343.70 L259.70 345.20 L257.60 346.70 Z" fill="#24163a"/><rect x="268.00" y="344.80" width="60.70" height="0.8" fill="#2c1d40"/><path d="M327.50 343.70 L329.60 345.20 L327.50 346.70 Z" fill="#24163a"/><rect x="337.91" y="344.80" width="60.70" height="0.8" fill="#2c1d40"/><path d="M397.41 343.70 L399.50 345.20 L397.41 346.70 Z" fill="#24163a"/><rect x="407.81" y="344.80" width="25.75" height="0.8" fill="#2c1d40"/><path d="M432.35 343.70 L434.45 345.20 L432.35 346.70 Z" fill="#24163a"/><rect x="442.75" y="344.80" width="25.75" height="0.8" fill="#2c1d40"/><path d="M467.31 343.70 L469.40 345.20 L467.31 346.70 Z" fill="#24163a"/><rect x="477.71" y="344.80" width="25.75" height="0.8" fill="#2c1d40"/><path d="M502.25 343.70 L504.35 345.20 L502.25 346.70 Z" fill="#24163a"/><rect x="512.65" y="344.80" width="25.75" height="0.8" fill="#2c1d40"/><path d="M537.20 343.70 L539.30 345.20 L537.20 346.70 Z" fill="#24163a"/><circle cx="197.40" cy="345.20" r="1.35" fill="#150b24"/><circle cx="263.80" cy="345.20" r="1.35" fill="#150b24"/><circle cx="333.70" cy="345.20" r="1.35" fill="#150b24"/><circle cx="403.61" cy="345.20" r="1.35" fill="#150b24"/><circle cx="438.55" cy="345.20" r="1.35" fill="#150b24"/><circle cx="473.50" cy="345.20" r="1.35" fill="#150b24"/><circle cx="508.45" cy="345.20" r="1.35" fill="#150b24"/><circle cx="543.40" cy="345.20" r="1.35" fill="#150b24"/><rect x="196" y="360.28" width="349.50" height="1.2" fill="#3d2a55"/><rect x="201.60" y="357.29" width="57.20" height="0.8" fill="#2c1d40"/><path d="M257.60 356.19 L259.70 357.69 L257.60 359.19 Z" fill="#24163a"/><rect x="268.00" y="357.29" width="60.70" height="0.8" fill="#2c1d40"/><path d="M327.50 356.19 L329.60 357.69 L327.50 359.19 Z" fill="#24163a"/><rect x="337.91" y="357.29" width="60.70" height="0.8" fill="#2c1d40"/><path d="M397.41 356.19 L399.50 357.69 L397.41 359.19 Z" fill="#24163a"/><rect x="407.81" y="357.29" width="25.75" height="0.8" fill="#2c1d40"/><path d="M432.35 356.19 L434.45 357.69 L432.35 359.19 Z" fill="#24163a"/><rect x="442.75" y="357.29" width="25.75" height="0.8" fill="#2c1d40"/><path d="M467.31 356.19 L469.40 357.69 L467.31 359.19 Z" fill="#24163a"/><rect x="477.71" y="357.29" width="25.75" height="0.8" fill="#2c1d40"/><path d="M502.25 356.19 L504.35 357.69 L502.25 359.19 Z" fill="#24163a"/><rect x="512.65" y="357.29" width="25.75" height="0.8" fill="#2c1d40"/><path d="M537.20 356.19 L539.30 357.69 L537.20 359.19 Z" fill="#24163a"/><circle cx="197.40" cy="357.69" r="1.35" fill="#150b24"/><circle cx="263.80" cy="357.69" r="1.35" fill="#150b24"/><circle cx="333.70" cy="357.69" r="1.35" fill="#150b24"/><circle cx="403.61" cy="357.69" r="1.35" fill="#150b24"/><circle cx="438.55" cy="357.69" r="1.35" fill="#150b24"/><circle cx="473.50" cy="357.69" r="1.35" fill="#150b24"/><circle cx="508.45" cy="357.69" r="1.35" fill="#150b24"/><circle cx="543.40" cy="357.69" r="1.35" fill="#150b24"/><rect x="196" y="372.77" width="349.50" height="1.2" fill="#3d2a55"/><rect x="201.60" y="369.78" width="57.20" height="0.8" fill="#2c1d40"/><path d="M257.60 368.68 L259.70 370.18 L257.60 371.68 Z" fill="#24163a"/><rect x="268.00" y="369.78" width="60.70" height="0.8" fill="#2c1d40"/><path d="M327.50 368.68 L329.60 370.18 L327.50 371.68 Z" fill="#24163a"/><rect x="337.91" y="369.78" width="60.70" height="0.8" fill="#2c1d40"/><path d="M397.41 368.68 L399.50 370.18 L397.41 371.68 Z" fill="#24163a"/><rect x="407.81" y="369.78" width="25.75" height="0.8" fill="#2c1d40"/><path d="M432.35 368.68 L434.45 370.18 L432.35 371.68 Z" fill="#24163a"/><rect x="442.75" y="369.78" width="25.75" height="0.8" fill="#2c1d40"/><path d="M467.31 368.68 L469.40 370.18 L467.31 371.68 Z" fill="#24163a"/><rect x="477.71" y="369.78" width="25.75" height="0.8" fill="#2c1d40"/><path d="M502.25 368.68 L504.35 370.18 L502.25 371.68 Z" fill="#24163a"/><rect x="512.65" y="369.78" width="25.75" height="0.8" fill="#2c1d40"/><path d="M537.20 368.68 L539.30 370.18 L537.20 371.68 Z" fill="#24163a"/><circle cx="197.40" cy="370.18" r="1.35" fill="#150b24"/><circle cx="263.80" cy="370.18" r="1.35" fill="#150b24"/><circle cx="333.70" cy="370.18" r="1.35" fill="#150b24"/><circle cx="403.61" cy="370.18" r="1.35" fill="#150b24"/><circle cx="438.55" cy="370.18" r="1.35" fill="#150b24"/><circle cx="473.50" cy="370.18" r="1.35" fill="#150b24"/><circle cx="508.45" cy="370.18" r="1.35" fill="#150b24"/><circle cx="543.40" cy="370.18" r="1.35" fill="#150b24"/><rect x="196" y="385.26" width="349.50" height="1.2" fill="#3d2a55"/><rect x="201.60" y="382.27" width="57.20" height="0.8" fill="#2c1d40"/><path d="M257.60 381.17 L259.70 382.67 L257.60 384.17 Z" fill="#24163a"/><rect x="268.00" y="382.27" width="60.70" height="0.8" fill="#2c1d40"/><path d="M327.50 381.17 L329.60 382.67 L327.50 384.17 Z" fill="#24163a"/><rect x="337.91" y="382.27" width="60.70" height="0.8" fill="#2c1d40"/><path d="M397.41 381.17 L399.50 382.67 L397.41 384.17 Z" fill="#24163a"/><rect x="407.81" y="382.27" width="25.75" height="0.8" fill="#2c1d40"/><path d="M432.35 381.17 L434.45 382.67 L432.35 384.17 Z" fill="#24163a"/><rect x="442.75" y="382.27" width="25.75" height="0.8" fill="#2c1d40"/><path d="M467.31 381.17 L469.40 382.67 L467.31 384.17 Z" fill="#24163a"/><rect x="477.71" y="382.27" width="25.75" height="0.8" fill="#2c1d40"/><path d="M502.25 381.17 L504.35 382.67 L502.25 384.17 Z" fill="#24163a"/><rect x="512.65" y="382.27" width="25.75" height="0.8" fill="#2c1d40"/><path d="M537.20 381.17 L539.30 382.67 L537.20 384.17 Z" fill="#24163a"/><circle cx="197.40" cy="382.67" r="1.35" fill="#150b24"/><circle cx="263.80" cy="382.67" r="1.35" fill="#150b24"/><circle cx="333.70" cy="382.67" r="1.35" fill="#150b24"/><circle cx="403.61" cy="382.67" r="1.35" fill="#150b24"/><circle cx="438.55" cy="382.67" r="1.35" fill="#150b24"/><circle cx="473.50" cy="382.67" r="1.35" fill="#150b24"/><circle cx="508.45" cy="382.67" r="1.35" fill="#150b24"/><circle cx="543.40" cy="382.67" r="1.35" fill="#150b24"/><rect x="196" y="397.75" width="349.50" height="1.2" fill="#3d2a55"/><rect x="201.60" y="394.76" width="57.20" height="0.8" fill="#2c1d40"/><path d="M257.60 393.66 L259.70 395.16 L257.60 396.66 Z" fill="#24163a"/><rect x="268.00" y="394.76" width="60.70" height="0.8" fill="#2c1d40"/><path d="M327.50 393.66 L329.60 395.16 L327.50 396.66 Z" fill="#24163a"/><rect x="337.91" y="394.76" width="60.70" height="0.8" fill="#2c1d40"/><path d="M397.41 393.66 L399.50 395.16 L397.41 396.66 Z" fill="#24163a"/><rect x="407.81" y="394.76" width="25.75" height="0.8" fill="#2c1d40"/><path d="M432.35 393.66 L434.45 395.16 L432.35 396.66 Z" fill="#24163a"/><rect x="442.75" y="394.76" width="25.75" height="0.8" fill="#2c1d40"/><path d="M467.31 393.66 L469.40 395.16 L467.31 396.66 Z" fill="#24163a"/><rect x="477.71" y="394.76" width="25.75" height="0.8" fill="#2c1d40"/><path d="M502.25 393.66 L504.35 395.16 L502.25 396.66 Z" fill="#24163a"/><rect x="512.65" y="394.76" width="25.75" height="0.8" fill="#2c1d40"/><path d="M537.20 393.66 L539.30 395.16 L537.20 396.66 Z" fill="#24163a"/><circle cx="197.40" cy="395.16" r="1.35" fill="#150b24"/><circle cx="263.80" cy="395.16" r="1.35" fill="#150b24"/><circle cx="333.70" cy="395.16" r="1.35" fill="#150b24"/><circle cx="403.61" cy="395.16" r="1.35" fill="#150b24"/><circle cx="438.55" cy="395.16" r="1.35" fill="#150b24"/><circle cx="473.50" cy="395.16" r="1.35" fill="#150b24"/><circle cx="508.45" cy="395.16" r="1.35" fill="#150b24"/><circle cx="543.40" cy="395.16" r="1.35" fill="#150b24"/><rect x="196" y="410.24" width="349.50" height="1.2" fill="#3d2a55"/><rect x="201.60" y="407.25" width="57.20" height="0.8" fill="#2c1d40"/><path d="M257.60 406.15 L259.70 407.65 L257.60 409.15 Z" fill="#24163a"/><rect x="268.00" y="407.25" width="60.70" height="0.8" fill="#2c1d40"/><path d="M327.50 406.15 L329.60 407.65 L327.50 409.15 Z" fill="#24163a"/><rect x="337.91" y="407.25" width="60.70" height="0.8" fill="#2c1d40"/><path d="M397.41 406.15 L399.50 407.65 L397.41 409.15 Z" fill="#24163a"/><rect x="407.81" y="407.25" width="25.75" height="0.8" fill="#2c1d40"/><path d="M432.35 406.15 L434.45 407.65 L432.35 409.15 Z" fill="#24163a"/><rect x="442.75" y="407.25" width="25.75" height="0.8" fill="#2c1d40"/><path d="M467.31 406.15 L469.40 407.65 L467.31 409.15 Z" fill="#24163a"/><rect x="477.71" y="407.25" width="25.75" height="0.8" fill="#2c1d40"/><path d="M502.25 406.15 L504.35 407.65 L502.25 409.15 Z" fill="#24163a"/><rect x="512.65" y="407.25" width="25.75" height="0.8" fill="#2c1d40"/><path d="M537.20 406.15 L539.30 407.65 L537.20 409.15 Z" fill="#24163a"/><circle cx="197.40" cy="407.65" r="1.35" fill="#150b24"/><circle cx="263.80" cy="407.65" r="1.35" fill="#150b24"/><circle cx="333.70" cy="407.65" r="1.35" fill="#150b24"/><circle cx="403.61" cy="407.65" r="1.35" fill="#150b24"/><circle cx="438.55" cy="407.65" r="1.35" fill="#150b24"/><circle cx="473.50" cy="407.65" r="1.35" fill="#150b24"/><circle cx="508.45" cy="407.65" r="1.35" fill="#150b24"/><circle cx="543.40" cy="407.65" r="1.35" fill="#150b24"/><rect x="196" y="422.73" width="349.50" height="1.2" fill="#3d2a55"/><rect x="201.60" y="419.74" width="57.20" height="0.8" fill="#2c1d40"/><path d="M257.60 418.64 L259.70 420.14 L257.60 421.64 Z" fill="#24163a"/><rect x="268.00" y="419.74" width="60.70" height="0.8" fill="#2c1d40"/><path d="M327.50 418.64 L329.60 420.14 L327.50 421.64 Z" fill="#24163a"/><rect x="337.91" y="419.74" width="60.70" height="0.8" fill="#2c1d40"/><path d="M397.41 418.64 L399.50 420.14 L397.41 421.64 Z" fill="#24163a"/><rect x="407.81" y="419.74" width="25.75" height="0.8" fill="#2c1d40"/><path d="M432.35 418.64 L434.45 420.14 L432.35 421.64 Z" fill="#24163a"/><rect x="442.75" y="419.74" width="25.75" height="0.8" fill="#2c1d40"/><path d="M467.31 418.64 L469.40 420.14 L467.31 421.64 Z" fill="#24163a"/><rect x="477.71" y="419.74" width="25.75" height="0.8" fill="#2c1d40"/><path d="M502.25 418.64 L504.35 420.14 L502.25 421.64 Z" fill="#24163a"/><rect x="512.65" y="419.74" width="25.75" height="0.8" fill="#2c1d40"/><path d="M537.20 418.64 L539.30 420.14 L537.20 421.64 Z" fill="#24163a"/><circle cx="197.40" cy="420.14" r="1.35" fill="#150b24"/><circle cx="263.80" cy="420.14" r="1.35" fill="#150b24"/><circle cx="333.70" cy="420.14" r="1.35" fill="#150b24"/><circle cx="403.61" cy="420.14" r="1.35" fill="#150b24"/><circle cx="438.55" cy="420.14" r="1.35" fill="#150b24"/><circle cx="473.50" cy="420.14" r="1.35" fill="#150b24"/><circle cx="508.45" cy="420.14" r="1.35" fill="#150b24"/><circle cx="543.40" cy="420.14" r="1.35" fill="#150b24"/><rect x="196" y="435.22" width="349.50" height="1.2" fill="#3d2a55"/><rect x="201.60" y="432.23" width="57.20" height="0.8" fill="#2c1d40"/><path d="M257.60 431.13 L259.70 432.63 L257.60 434.13 Z" fill="#24163a"/><rect x="268.00" y="432.23" width="60.70" height="0.8" fill="#2c1d40"/><path d="M327.50 431.13 L329.60 432.63 L327.50 434.13 Z" fill="#24163a"/><rect x="337.91" y="432.23" width="60.70" height="0.8" fill="#2c1d40"/><path d="M397.41 431.13 L399.50 432.63 L397.41 434.13 Z" fill="#24163a"/><rect x="407.81" y="432.23" width="25.75" height="0.8" fill="#2c1d40"/><path d="M432.35 431.13 L434.45 432.63 L432.35 434.13 Z" fill="#24163a"/><rect x="442.75" y="432.23" width="25.75" height="0.8" fill="#2c1d40"/><path d="M467.31 431.13 L469.40 432.63 L467.31 434.13 Z" fill="#24163a"/><rect x="477.71" y="432.23" width="25.75" height="0.8" fill="#2c1d40"/><path d="M502.25 431.13 L504.35 432.63 L502.25 434.13 Z" fill="#24163a"/><rect x="512.65" y="432.23" width="25.75" height="0.8" fill="#2c1d40"/><path d="M537.20 431.13 L539.30 432.63 L537.20 434.13 Z" fill="#24163a"/><circle cx="197.40" cy="432.63" r="1.35" fill="#150b24"/><circle cx="263.80" cy="432.63" r="1.35" fill="#150b24"/><circle cx="333.70" cy="432.63" r="1.35" fill="#150b24"/><circle cx="403.61" cy="432.63" r="1.35" fill="#150b24"/><circle cx="438.55" cy="432.63" r="1.35" fill="#150b24"/><circle cx="473.50" cy="432.63" r="1.35" fill="#150b24"/><circle cx="508.45" cy="432.63" r="1.35" fill="#150b24"/><circle cx="543.40" cy="432.63" r="1.35" fill="#150b24"/><rect x="196" y="447.71" width="349.50" height="1.2" fill="#3d2a55"/><rect x="201.60" y="444.72" width="57.20" height="0.8" fill="#2c1d40"/><path d="M257.60 443.62 L259.70 445.12 L257.60 446.62 Z" fill="#24163a"/><rect x="268.00" y="444.72" width="60.70" height="0.8" fill="#2c1d40"/><path d="M327.50 443.62 L329.60 445.12 L327.50 446.62 Z" fill="#24163a"/><rect x="337.91" y="444.72" width="60.70" height="0.8" fill="#2c1d40"/><path d="M397.41 443.62 L399.50 445.12 L397.41 446.62 Z" fill="#24163a"/><rect x="407.81" y="444.72" width="25.75" height="0.8" fill="#2c1d40"/><path d="M432.35 443.62 L434.45 445.12 L432.35 446.62 Z" fill="#24163a"/><rect x="442.75" y="444.72" width="25.75" height="0.8" fill="#2c1d40"/><path d="M467.31 443.62 L469.40 445.12 L467.31 446.62 Z" fill="#24163a"/><rect x="477.71" y="444.72" width="25.75" height="0.8" fill="#2c1d40"/><path d="M502.25 443.62 L504.35 445.12 L502.25 446.62 Z" fill="#24163a"/><rect x="512.65" y="444.72" width="25.75" height="0.8" fill="#2c1d40"/><path d="M537.20 443.62 L539.30 445.12 L537.20 446.62 Z" fill="#24163a"/><circle cx="197.40" cy="445.12" r="1.35" fill="#150b24"/><circle cx="263.80" cy="445.12" r="1.35" fill="#150b24"/><circle cx="333.70" cy="445.12" r="1.35" fill="#150b24"/><circle cx="403.61" cy="445.12" r="1.35" fill="#150b24"/><circle cx="438.55" cy="445.12" r="1.35" fill="#150b24"/><circle cx="473.50" cy="445.12" r="1.35" fill="#150b24"/><circle cx="508.45" cy="445.12" r="1.35" fill="#150b24"/><circle cx="543.40" cy="445.12" r="1.35" fill="#150b24"/><rect x="196" y="460.20" width="349.50" height="1.2" fill="#3d2a55"/><rect x="201.60" y="457.21" width="57.20" height="0.8" fill="#2c1d40"/><path d="M257.60 456.11 L259.70 457.61 L257.60 459.11 Z" fill="#24163a"/><rect x="268.00" y="457.21" width="60.70" height="0.8" fill="#2c1d40"/><path d="M327.50 456.11 L329.60 457.61 L327.50 459.11 Z" fill="#24163a"/><rect x="337.91" y="457.21" width="60.70" height="0.8" fill="#2c1d40"/><path d="M397.41 456.11 L399.50 457.61 L397.41 459.11 Z" fill="#24163a"/><rect x="407.81" y="457.21" width="25.75" height="0.8" fill="#2c1d40"/><path d="M432.35 456.11 L434.45 457.61 L432.35 459.11 Z" fill="#24163a"/><rect x="442.75" y="457.21" width="25.75" height="0.8" fill="#2c1d40"/><path d="M467.31 456.11 L469.40 457.61 L467.31 459.11 Z" fill="#24163a"/><rect x="477.71" y="457.21" width="25.75" height="0.8" fill="#2c1d40"/><path d="M502.25 456.11 L504.35 457.61 L502.25 459.11 Z" fill="#24163a"/><rect x="512.65" y="457.21" width="25.75" height="0.8" fill="#2c1d40"/><path d="M537.20 456.11 L539.30 457.61 L537.20 459.11 Z" fill="#24163a"/><circle cx="197.40" cy="457.61" r="1.35" fill="#150b24"/><circle cx="263.80" cy="457.61" r="1.35" fill="#150b24"/><circle cx="333.70" cy="457.61" r="1.35" fill="#150b24"/><circle cx="403.61" cy="457.61" r="1.35" fill="#150b24"/><circle cx="438.55" cy="457.61" r="1.35" fill="#150b24"/><circle cx="473.50" cy="457.61" r="1.35" fill="#150b24"/><circle cx="508.45" cy="457.61" r="1.35" fill="#150b24"/><circle cx="543.40" cy="457.61" r="1.35" fill="#150b24"/><circle cx="197.00" cy="469.80" r="1.2" fill="#222"/><rect x="542.61" y="466.90" width="1.6" height="4.5" fill="none" stroke="#666" stroke-width="0.5"/></svg>
<div class="a" style="left:28px;top:473.9px;width:712px;height:1.1px;background:#262626"></div>
<div class="a" style="left:738px;top:282.5px;width:2px;height:192.5px;background:#282828"></div>
<div class="a" style="left:196px;top:316px;width:544px;height:20.5px;background:#2f2f2f"></div>
<div class="t" style="left:210.38px;top:328.9px;font-size:5px;letter-spacing:-0.12px;color:#707070">5</div>
<div class="t" style="left:227.86px;top:328.9px;font-size:5px;letter-spacing:-0.12px;color:#707070">10</div>
<div class="t" style="left:245.33px;top:328.9px;font-size:5px;letter-spacing:-0.12px;color:#707070">15</div>
<div class="t" style="left:262.80px;top:328.9px;font-size:5px;letter-spacing:-0.12px;color:#707070">20</div>
<div class="t" style="left:280.28px;top:328.9px;font-size:5px;letter-spacing:-0.12px;color:#707070">25</div>
<div class="t" style="left:297.75px;top:328.9px;font-size:5px;letter-spacing:-0.12px;color:#707070">30</div>
<div class="t" style="left:315.23px;top:328.9px;font-size:5px;letter-spacing:-0.12px;color:#707070">35</div>
<div class="t" style="left:332.70px;top:328.9px;font-size:5px;letter-spacing:-0.12px;color:#707070">40</div>
<div class="t" style="left:350.18px;top:328.9px;font-size:5px;letter-spacing:-0.12px;color:#707070">45</div>
<div class="t" style="left:367.65px;top:328.9px;font-size:5px;letter-spacing:-0.12px;color:#707070">50</div>
<div class="t" style="left:385.13px;top:328.9px;font-size:5px;letter-spacing:-0.12px;color:#707070">55</div>
<div class="t" style="left:402.61px;top:328.9px;font-size:5px;letter-spacing:-0.12px;color:#707070">60</div>
<div class="t" style="left:420.08px;top:328.9px;font-size:5px;letter-spacing:-0.12px;color:#707070">65</div>
<div class="t" style="left:437.55px;top:328.9px;font-size:5px;letter-spacing:-0.12px;color:#707070">70</div>
<div class="t" style="left:455.03px;top:328.9px;font-size:5px;letter-spacing:-0.12px;color:#707070">75</div>
<div class="t" style="left:472.50px;top:328.9px;font-size:5px;letter-spacing:-0.12px;color:#707070">80</div>
<div class="t" style="left:489.98px;top:328.9px;font-size:5px;letter-spacing:-0.12px;color:#707070">85</div>
<div class="t" style="left:507.45px;top:328.9px;font-size:5px;letter-spacing:-0.12px;color:#707070">90</div>
<div class="t" style="left:524.93px;top:328.9px;font-size:5px;letter-spacing:-0.12px;color:#707070">95</div>
<div class="t" style="left:542.40px;top:328.9px;font-size:5px;letter-spacing:-0.12px;color:#707070">100</div>
<div class="t" style="left:559.88px;top:328.9px;font-size:5px;letter-spacing:-0.12px;color:#707070">105</div>
<div class="t" style="left:577.35px;top:328.9px;font-size:5px;letter-spacing:-0.12px;color:#707070">110</div>
<div class="t" style="left:594.83px;top:328.9px;font-size:5px;letter-spacing:-0.12px;color:#707070">115</div>
<div class="t" style="left:612.30px;top:328.9px;font-size:5px;letter-spacing:-0.12px;color:#707070">120</div>
<div class="t" style="left:629.78px;top:328.9px;font-size:5px;letter-spacing:-0.12px;color:#707070">125</div>
<div class="t" style="left:647.25px;top:328.9px;font-size:5px;letter-spacing:-0.12px;color:#707070">130</div>
<div class="t" style="left:664.73px;top:328.9px;font-size:5px;letter-spacing:-0.12px;color:#707070">135</div>
<div class="t" style="left:682.21px;top:328.9px;font-size:5px;letter-spacing:-0.12px;color:#707070">140</div>
<div class="t" style="left:699.68px;top:328.9px;font-size:5px;letter-spacing:-0.12px;color:#707070">145</div>
<div class="t" style="left:717.15px;top:328.9px;font-size:5px;letter-spacing:-0.12px;color:#707070">150</div>
<div class="t" style="left:297.86px;top:317.8px;font-size:4.8px;color:#7a7a7a">1s</div>
<div class="t" style="left:402.71px;top:317.8px;font-size:4.8px;color:#7a7a7a">2s</div>
<div class="t" style="left:507.56px;top:317.8px;font-size:4.8px;color:#7a7a7a">3s</div>
<div class="t" style="left:612.40px;top:317.8px;font-size:4.8px;color:#7a7a7a">4s</div>
<div class="t" style="left:717.25px;top:317.8px;font-size:4.8px;color:#7a7a7a">5s</div>
<div class="a" style="left:196.1px;top:315.8px;width:2.4px;height:21px;background:#3f8cd8;border-radius:1px 1px 0 0"></div>
<div class="a" style="left:196px;top:336.5px;width:2.2px;height:137.4px;background:#5a96e8;opacity:0.55"></div>
</body>
</html>
